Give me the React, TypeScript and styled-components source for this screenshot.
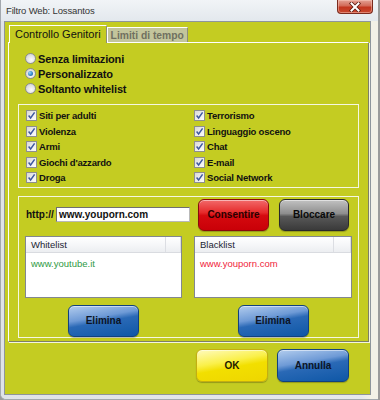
import styled, { createGlobalStyle, css } from "styled-components";

const GlobalStyle = createGlobalStyle`
  html, body {
    margin: 0;
    padding: 0;
  }
  body {
    width: 380px;
    height: 400px;
    overflow: hidden;
    background: #9b9b9b;
    font-family: "Liberation Sans", Arial, sans-serif;
  }
`;

const FONT = `"Liberation Sans", Arial, sans-serif`;

const Screen = styled.div`
  display: flex;
  width: 380px;
  height: 400px;
`;

const Window = styled.div`
  width: 378px;
  height: 400px;
  box-sizing: border-box;
  display: flex;
  flex-direction: column;
  background: #e4e8ec;
  border-left: 1px solid #a3a8ae;
  border-bottom: 1px solid #a3a8ae;
  border-bottom-left-radius: 6px;
  overflow: hidden;
`;

const TitleBar = styled.div`
  height: 21px;
  flex: none;
  display: flex;
  align-items: flex-start;
  padding-left: 5px;
  background: linear-gradient(to bottom, #f1f4f7, #e3e8ed);
`;

const Caption = styled.span`
  line-height: 21px;
  font-size: 9.5px;
  letter-spacing: -0.15px;
  color: #353535;
`;

const CloseButton = styled.div`
  margin-left: auto;
  margin-right: 5px;
  width: 36px;
  height: 14px;
  box-sizing: border-box;
  display: flex;
  align-items: center;
  justify-content: center;
  border: 1px solid #7a2a1e;
  border-top: none;
  border-radius: 0 0 4px 4px;
  background: linear-gradient(to bottom, #e3a195 0%, #d26a58 45%, #c2351f 55%, #c8482e 100%);
  box-shadow: inset 0 0 0 1px rgba(255, 210, 200, 0.45);
`;

const Frame = styled.div`
  flex: 1;
  display: flex;
  padding: 0 7px 4px 3px;
  background: linear-gradient(to right, #dfe3e7 0, #e6e9ec 360px, #f3f1e7 370px);
`;

const Client = styled.div`
  flex: 1;
  display: flex;
  flex-direction: column;
  border: 1px solid #8e959c;
  background: #c4cc22;
`;

const TabStrip = styled.div`
  display: flex;
  align-items: flex-end;
  padding: 3px 0 0 4px;
`;

const Tab = styled.div<{ $active?: boolean }>`
  box-sizing: border-box;
  display: flex;
  align-items: center;
  font-family: ${FONT};
  border-top: 1px solid #ffffff;
  border-left: 1px solid #ffffff;
  border-right: 1px solid #8d8f78;
  ${(p) =>
    p.$active
      ? css`
          position: relative;
          z-index: 1;
          height: 18px;
          margin-bottom: -1px;
          padding: 0 5px 1px 5px;
          background: #c4cc22;
          font-size: 11px;
          color: #111;
        `
      : css`
          height: 15px;
          padding: 0 3px;
          background: #c3c59c;
          font-size: 10.3px;
          font-weight: bold;
          color: #707060;
        `}
`;

const TabPanel = styled.div`
  margin: 0 1px 0 3px;
  padding: 8px 9px 3px 9px;
  border-top: 1px solid #ffffff;
  border-left: 1px solid #ffffff;
  border-right: 1px solid #7d7f68;
  border-bottom: 1px solid #7d7f68;
  box-shadow: 1px 1px 0 #f4f6dc;
  display: flex;
  flex-direction: column;
`;

const RadioList = styled.div`
  display: flex;
  flex-direction: column;
  padding-left: 7px;
`;

const OptionRow = styled.label<{ $h: number }>`
  height: ${(p) => p.$h}px;
  display: flex;
  align-items: center;
  gap: 2px;
`;

const RadioDot = styled.span<{ $checked?: boolean }>`
  width: 11px;
  height: 11px;
  box-sizing: border-box;
  border-radius: 50%;
  border: 1px solid #8a8c8e;
  background: radial-gradient(circle at 60% 65%, #fbfbfb 0%, #e6e6e6 45%, #c9c9c9 100%);
  display: flex;
  align-items: center;
  justify-content: center;
  &::after {
    content: "";
    width: 5px;
    height: 5px;
    border-radius: 50%;
    display: ${(p) => (p.$checked ? "block" : "none")};
    background: radial-gradient(circle at 35% 35%, #9ad6fb 0%, #3a8fd0 50%, #1b4f86 100%);
  }
`;

const RadioText = styled.span`
  font-size: 11px;
  font-weight: bold;
  letter-spacing: -0.15px;
  color: #111;
`;

const GroupBox = styled.div`
  margin-top: 8px;
  border: 1px solid #f5f7e2;
  display: flex;
  flex-direction: column;
`;

const CheckGrid = styled.div`
  display: grid;
  grid-template-columns: 168px 1fr;
  grid-template-rows: repeat(5, 15.5px);
  grid-auto-flow: column;
  padding: 3px 0 1px 7px;
`;

const CheckBox = styled.span`
  width: 11px;
  height: 11px;
  box-sizing: border-box;
  border: 1px solid #8e8f8f;
  background: linear-gradient(135deg, #d8d8d8 0%, #f0f0f0 60%, #fcfcfc 100%);
  display: flex;
  align-items: center;
  justify-content: center;
`;

const CheckText = styled.span`
  font-size: 9.5px;
  font-weight: bold;
  letter-spacing: -0.2px;
  color: #111;
`;

const UrlRow = styled.div`
  height: 32px;
  margin-top: 2px;
  padding-left: 7px;
  display: flex;
  align-items: center;
`;

const UrlLabel = styled.span`
  width: 30px;
  font-size: 10px;
  font-weight: bold;
  color: #111;
`;

const UrlInput = styled.div`
  width: 134px;
  height: 15px;
  box-sizing: border-box;
  border: 1px solid #6f6f6f;
  border-bottom-color: #b9b9b9;
  border-right-color: #b9b9b9;
  background: #fff;
  padding-left: 2px;
  font-size: 10px;
  font-weight: bold;
  line-height: 13px;
  color: #111;
  margin-right: 8px;
`;

const ButtonPair = styled.div<{ $gap: number }>`
  display: flex;
  gap: ${(p) => p.$gap}px;
`;

type Tone = "red" | "gray" | "blue" | "yellow";

const tones: Record<Tone, ReturnType<typeof css>> = {
  red: css`
    background: linear-gradient(to bottom, #f26a6a 0%, #e52a2a 42%, #d50a0f 52%, #c90008 100%);
    border-color: #8a0a0a;
    color: #2a0000;
  `,
  gray: css`
    background: linear-gradient(to bottom, #c2c2c2 0%, #8e8e8e 45%, #585858 55%, #3a3a3a 100%);
    border-color: #2a2a2a;
    color: #0a0a0a;
  `,
  blue: css`
    background: linear-gradient(170deg, #b3cdee 0%, #6e9ad6 38%, #2a69b6 52%, #0e57a6 100%);
    border-color: #11417e;
    color: #0c1426;
  `,
  yellow: css`
    background: linear-gradient(170deg, #fffbc0 0%, #faf04a 38%, #f2df00 55%, #eed600 100%);
    border-color: #c4ae10;
    color: #1e1a00;
  `,
};

const GlossButton = styled.button<{ $tone: Tone; $w: number; $h?: number }>`
  width: ${(p) => p.$w}px;
  height: ${(p) => p.$h ?? 32}px;
  box-sizing: border-box;
  flex: none;
  padding: 0;
  border: 1px solid;
  border-radius: 6px;
  font-family: ${FONT};
  font-size: 10px;
  font-weight: bold;
  box-shadow: inset 0 1px 0 rgba(255, 255, 255, 0.5), 0 1px 1px rgba(0, 0, 0, 0.25);
  cursor: pointer;
  ${(p) => tones[p.$tone]}
`;

const ListsRow = styled.div`
  display: flex;
  gap: 12px;
  margin-top: 5px;
  padding-left: 6px;
`;

const ListColumn = styled.div<{ $w: number }>`
  width: ${(p) => p.$w}px;
  display: flex;
  flex-direction: column;
  align-items: center;
  gap: 7px;
`;

const ListBox = styled.div`
  width: 100%;
  height: 62px;
  box-sizing: border-box;
  border: 1px solid #828790;
  background: #fff;
`;

const ListHeader = styled.div`
  height: 16px;
  box-sizing: border-box;
  display: flex;
  border-bottom: 1px solid #d9dbe0;
  background: linear-gradient(to bottom, #ffffff 0%, #f6f7f9 50%, #eceef1 100%);
`;

const HeaderCell = styled.div<{ $w?: number }>`
  ${(p) => (p.$w ? `width: ${p.$w}px;` : "flex: 1;")}
  box-sizing: border-box;
  padding-left: 5px;
  border-right: 1px solid #dcdee3;
  font-size: 9.5px;
  line-height: 15px;
  color: #1c2533;
`;

const ListBody = styled.div`
  padding: 4px 5px;
`;

const ListItem = styled.div<{ $color: string }>`
  font-size: 9.5px;
  line-height: 14px;
  color: ${(p) => p.$color};
`;

const Footer = styled.div`
  display: flex;
  justify-content: flex-end;
  gap: 9px;
  padding: 7px 21px 0 0;
`;

const categoriesLeft = ["Siti per adulti", "Violenza", "Armi", "Giochi d'azzardo", "Droga"];
const categoriesRight = ["Terrorismo", "Linguaggio osceno", "Chat", "E-mail", "Social Network"];

function Check() {
  return (
    <CheckBox>
      <svg width="9" height="9" viewBox="0 0 9 9">
        <path d="M1.6 4.6 L3.6 7 L7.6 1.4" fill="none" stroke="#3e58a0" strokeWidth="1.5" />
      </svg>
    </CheckBox>
  );
}

function App() {
  return (
    <Screen>
      <GlobalStyle />
      <Window>
        <TitleBar>
          <Caption>Filtro Web: Lossantos</Caption>
          <CloseButton>
            <svg width="12" height="10" viewBox="0 0 12 10">
              <path d="M2.5 1.5 L9.5 8.5 M9.5 1.5 L2.5 8.5" stroke="#5a1a10" strokeWidth="3.6" strokeLinecap="square" />
              <path d="M2.5 1.5 L9.5 8.5 M9.5 1.5 L2.5 8.5" stroke="#ffffff" strokeWidth="2" strokeLinecap="square" />
            </svg>
          </CloseButton>
        </TitleBar>
        <Frame>
          <Client>
            <TabStrip>
              <Tab $active>Controllo Genitori</Tab>
              <Tab>Limiti di tempo</Tab>
            </TabStrip>
            <TabPanel>
              <RadioList>
                <OptionRow $h={15}>
                  <RadioDot />
                  <RadioText>Senza limitazioni</RadioText>
                </OptionRow>
                <OptionRow $h={15}>
                  <RadioDot $checked />
                  <RadioText>Personalizzato</RadioText>
                </OptionRow>
                <OptionRow $h={15}>
                  <RadioDot />
                  <RadioText>Soltanto whitelist</RadioText>
                </OptionRow>
              </RadioList>

              <GroupBox>
                <CheckGrid>
                  {[...categoriesLeft, ...categoriesRight].map((name) => (
                    <OptionRow key={name} $h={15.5}>
                      <Check />
                      <CheckText>{name}</CheckText>
                    </OptionRow>
                  ))}
                </CheckGrid>
              </GroupBox>

              <GroupBox>
                <UrlRow>
                  <UrlLabel>http://</UrlLabel>
                  <UrlInput>www.youporn.com</UrlInput>
                  <ButtonPair $gap={10}>
                    <GlossButton $tone="red" $w={71}>Consentire</GlossButton>
                    <GlossButton $tone="gray" $w={70}>Bloccare</GlossButton>
                  </ButtonPair>
                </UrlRow>
                <ListsRow>
                  <ListColumn $w={157}>
                    <ListBox>
                      <ListHeader>
                        <HeaderCell $w={140}>Whitelist</HeaderCell>
                        <HeaderCell />
                      </ListHeader>
                      <ListBody>
                        <ListItem $color="#2f9a44">www.youtube.it</ListItem>
                      </ListBody>
                    </ListBox>
                    <GlossButton $tone="blue" $w={71}>Elimina</GlossButton>
                  </ListColumn>
                  <ListColumn $w={158}>
                    <ListBox>
                      <ListHeader>
                        <HeaderCell $w={139}>Blacklist</HeaderCell>
                        <HeaderCell />
                      </ListHeader>
                      <ListBody>
                        <ListItem $color="#f0243a">www.youporn.com</ListItem>
                      </ListBody>
                    </ListBox>
                    <GlossButton $tone="blue" $w={71}>Elimina</GlossButton>
                  </ListColumn>
                </ListsRow>
              </GroupBox>
            </TabPanel>
            <Footer>
              <GlossButton $tone="yellow" $w={72} $h={33}>OK</GlossButton>
              <GlossButton $tone="blue" $w={72} $h={33}>Annulla</GlossButton>
            </Footer>
          </Client>
        </Frame>
      </Window>
    </Screen>
  );
}

export default App;
